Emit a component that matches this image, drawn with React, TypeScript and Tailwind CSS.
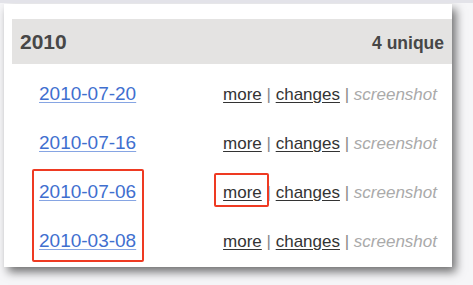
const rows = [
  { date: '2010-07-20' },
  { date: '2010-07-16' },
  { date: '2010-07-06' },
  { date: '2010-03-08' },
]

export default function App() {
  return (
    <div
      className="h-[285px] w-[473px] overflow-hidden border-t-[3px] border-[#e3e3e9] bg-[#f6f6f8] pt-[1px] pl-[4px]"
      style={{ fontFamily: '"Liberation Sans", Arial, sans-serif' }}
    >
      <div className="relative h-[263px] w-[448px] bg-white pt-[15px] pl-[8px] shadow-[4px_5px_9px_rgba(0,0,0,0.55)]">
        <div className="flex h-[45px] items-center justify-between bg-[#e4e3e2] pr-[8px] pl-[8px] text-[#474747]">
          <span className="text-[21px] font-bold">2010</span>
          <span className="pt-[3px] text-[17.5px] font-bold">4 unique</span>
        </div>
        <div className="pt-[3px]">
          {rows.map((r) => (
            <div key={r.date} className="flex h-[49px] items-baseline justify-between pt-[13px] pr-[15px] pl-[27px]">
              <a className="text-[19px] text-[#3f6fcf] underline decoration-[#86a5e3] underline-offset-[2px]">
                {r.date}
              </a>
              <span className="text-[17px] text-[#888]">
                <a className="text-[#333] underline underline-offset-[2px]">more</a> |{' '}
                <a className="text-[#333] underline underline-offset-[2px]">changes</a> |{' '}
                <span className="italic text-[#aaa]">screenshot</span>
              </span>
            </div>
          ))}
        </div>
        <div className="absolute top-[165px] left-[28px] h-[93px] w-[112px] rounded-[2px] border-2 border-[#ee3a22]" />
        <div className="absolute top-[169px] left-[210px] h-[34px] w-[55px] rounded-[2px] border-2 border-[#ee3a22]" />
      </div>
    </div>
  )
}
